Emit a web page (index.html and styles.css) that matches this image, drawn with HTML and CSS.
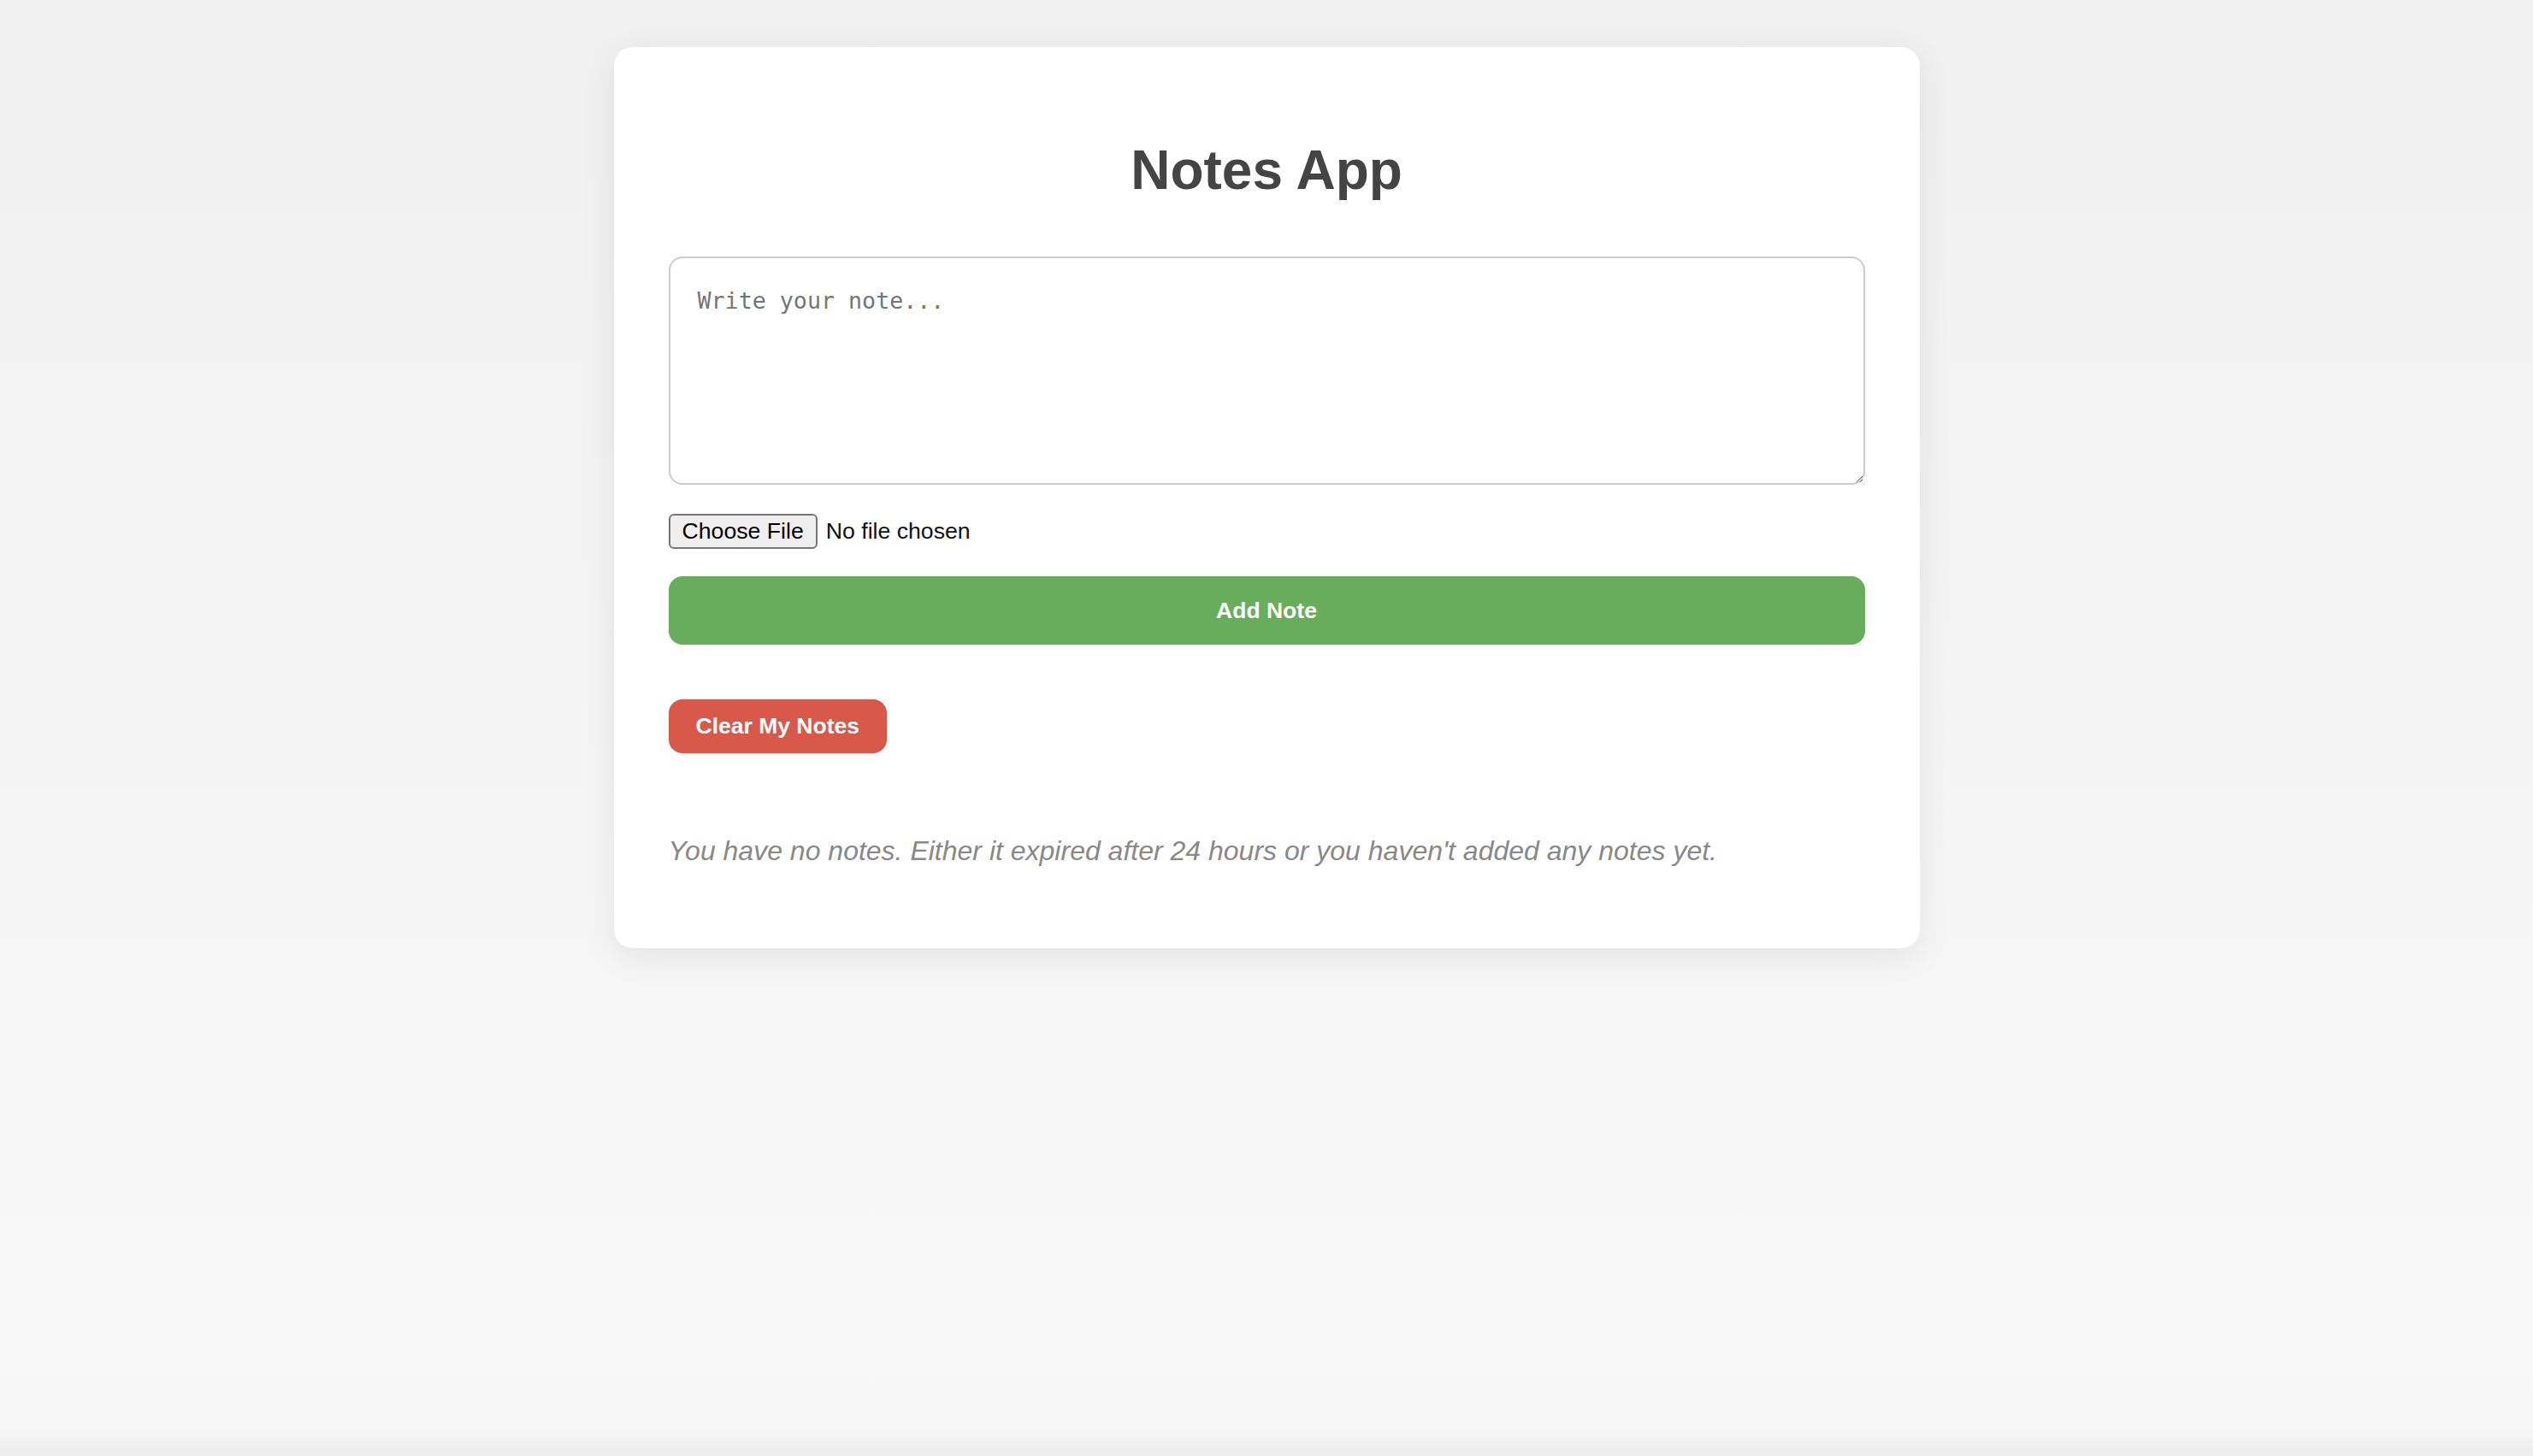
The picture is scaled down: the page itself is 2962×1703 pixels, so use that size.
FILE: index.html
```html
<!DOCTYPE html>
<html lang="en">
<head>
<meta charset="utf-8">
<title>Notes App</title>
<link rel="stylesheet" href="styles.css">
</head>
<body>
<main class="card">
  <h1 class="title">Notes App</h1>
  <textarea class="note-input" placeholder="Write your note..."></textarea>
  <label class="file">
    <span class="file-btn">Choose File</span>
    <span class="file-name">No file chosen</span>
  </label>
  <button class="btn btn-add">Add Note</button>
  <div class="actions">
    <button class="btn btn-clear">Clear My Notes</button>
  </div>
  <p class="empty">You have no notes. Either it expired after 24 hours or you haven't added any notes yet.</p>
</main>
</body>
</html>
```

FILE: styles.css
```css
html, body {
  margin: 0;
  padding: 0;
}
body {
  min-height: 100vh;
  box-sizing: border-box;
  background: linear-gradient(to bottom, #f0f0f0 0%, #f8f8f8 90%, #f7f7f7 98%, #ececec 100%);
  font-family: "Liberation Sans", Arial, Helvetica, sans-serif;
  padding-top: 55px;
}
.card {
  width: 1527px;
  box-sizing: border-box;
  margin: 0 auto;
  background: #fff;
  border-radius: 22px;
  box-shadow: 0 10px 40px rgba(0, 0, 0, 0.08);
  padding: 107px 64px 64px;
  display: flex;
  flex-direction: column;
  align-items: stretch;
}
.title {
  margin: 0;
  text-align: center;
  font-size: 64px;
  line-height: 74px;
  font-weight: 700;
  color: #444;
}
.note-input {
  margin-top: 64px;
  height: 267px;
  box-sizing: border-box;
  border: 2px solid #cccccc;
  border-radius: 16px;
  padding: 34px 32px;
  font-family: "DejaVu Sans Mono", Menlo, monospace;
  font-size: 26.67px;
  resize: vertical;
  outline: none;
}
.note-input::placeholder {
  color: #757575;
}
.file {
  margin-top: 34px;
  display: flex;
  align-items: center;
  gap: 10px;
  font-size: 26.67px;
  color: #000;
}
.file-btn {
  box-sizing: border-box;
  height: 41px;
  display: inline-flex;
  align-items: center;
  padding: 0 14px;
  background: #efefef;
  border: 2px solid #767676;
  border-radius: 6px;
}
.file-name {
  color: #111;
}
.btn {
  border: none;
  color: #fff;
  font-family: "Liberation Sans", Arial, Helvetica, sans-serif;
  font-weight: 700;
  cursor: pointer;
}
.btn-add {
  margin-top: 32px;
  height: 80px;
  border-radius: 16px;
  background: #68ad5c;
  font-size: 26.5px;
}
.actions {
  margin-top: 64px;
  display: flex;
}
.btn-clear {
  height: 63px;
  padding: 0 32px;
  border-radius: 16px;
  background: #d85849;
  font-size: 26.5px;
}
.empty {
  margin: 96px 0 31px;
  font-size: 32px;
  line-height: 37px;
  font-style: italic;
  color: #888;
}
```
